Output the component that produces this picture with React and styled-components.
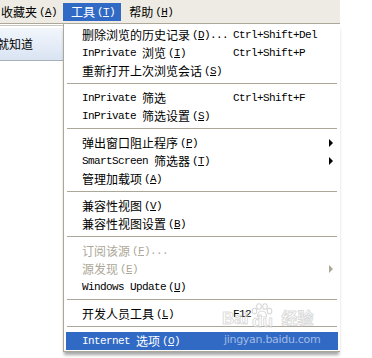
import React from 'react';
import styled, { createGlobalStyle } from 'styled-components';

const GlobalStyle = createGlobalStyle`
  html, body {
    margin: 0;
    padding: 0;
    background: #fff;
  }
  body {
    width: 372px;
    height: 358px;
    overflow: hidden;
    font: 12px/1 "Noto Sans CJK SC", "Liberation Sans", sans-serif;
    color: #000;
  }
`;

const Screen = styled.div`
  position: relative;
  width: 372px;
  height: 358px;
  overflow: hidden;
`;

const MenuBar = styled.div`
  display: flex;
  align-items: flex-start;
  width: 340px;
  height: 24px;
  box-sizing: border-box;
  padding-top: 3px;
  background: #edebe3;
  border-bottom: 1px solid #aca899;
`;

const BarItem = styled.div`
  display: flex;
  align-items: center;
  height: 18px;
  padding: 0 6px 0 8px;
  margin-left: ${p => (p.$first ? '-7px' : '0')};
  background: ${p => (p.$active ? '#316ac5' : 'transparent')};
  color: ${p => (p.$active ? '#fff' : '#000')};
  white-space: nowrap;
`;

const Latin = styled.span`
  font-family: "Liberation Mono", "DejaVu Sans Mono", monospace;
  font-size: 11px;
  letter-spacing: -0.6px;
  white-space: pre;
`;

const Accel = styled(Latin)`
  margin-left: 2px;
  u {
    text-decoration: underline;
    text-underline-offset: 1px;
  }
`;

const Body = styled.div`
  display: flex;
`;

const LeftPane = styled.div`
  width: 63px;
  margin-top: 1px;
  padding-top: 2px;
  border-top: 1px solid #c9c7bd;
`;

const Favorite = styled.div`
  display: flex;
  align-items: center;
  height: 33px;
  box-sizing: border-box;
  text-indent: -3px;
  background: linear-gradient(#f2f6fc, #d9e4f3);
  border-bottom: 1px solid #a9b0ba;
  overflow: hidden;
  white-space: nowrap;
`;

const Dropdown = styled.div`
  position: absolute;
  left: 63px;
  top: 24px;
  width: 277px;
  box-sizing: border-box;
  padding: 2px 2px 1px;
  background: #fff;
  border-left: 1px solid #aca899;
  border-bottom: 1px solid #aca899;
  box-shadow: 0 4px 3px -1px rgba(0, 0, 0, 0.35);
`;

const Row = styled.div`
  display: grid;
  grid-template-columns: 151px 1fr 10px;
  align-items: center;
  height: 18px;
  padding: 0 5px 0 16px;
  white-space: nowrap;
  color: ${p => (p.$active ? '#fff' : p.$disabled ? '#aca899' : '#000')};
  background: ${p => (p.$active ? '#316ac5' : 'transparent')};
`;

const Label = styled.span`
  display: flex;
  align-items: center;
`;

const Separator = styled.div`
  height: 1px;
  margin: 3px 1px 5px;
  background: #aca899;
`;

const Arrow = styled.span`
  justify-self: end;
  width: 0;
  height: 0;
  border-left: 4px solid currentColor;
  border-top: 4px solid transparent;
  border-bottom: 4px solid transparent;
`;

const Watermark = styled.div`
  position: absolute;
  left: 222px;
  top: 300px;
  display: flex;
  flex-direction: column;
  align-items: flex-start;
  pointer-events: none;
`;

const Logo = styled.div`
  display: flex;
  align-items: flex-end;
  height: 29px;
  font: bold 17px "Liberation Sans", Arial, sans-serif;
  color: rgba(255, 255, 255, 0.6);
  -webkit-text-stroke: 1px rgba(175, 175, 175, 0.45);
`;

const PawStack = styled.span`
  display: flex;
  flex-direction: column;
  align-items: center;
  margin-left: 3px;
`;

const Du = styled.span`
  margin-top: -3px;
  line-height: 15px;
`;

const Jing = styled.span`
  margin-left: 8px;
  font: bold 16px "Noto Sans CJK SC", sans-serif;
`;

const Site = styled.div`
  margin-top: 4px;
  padding-left: 2px;
  font: 11px "DejaVu Sans", Verdana, sans-serif;
  letter-spacing: -0.3px;
  color: rgba(255, 255, 255, 0.55);
`;

const items = [
  { label: '删除浏览的历史记录', key: 'D', tail: '...', shortcut: 'Ctrl+Shift+Del' },
  { label: 'InPrivate 浏览', key: 'I', shortcut: 'Ctrl+Shift+P' },
  { label: '重新打开上次浏览会话', key: 'S' },
  'sep',
  { label: 'InPrivate 筛选', shortcut: 'Ctrl+Shift+F' },
  { label: 'InPrivate 筛选设置', key: 'S' },
  'sep',
  { label: '弹出窗口阻止程序', key: 'P', submenu: true },
  { label: 'SmartScreen 筛选器', key: 'T', submenu: true },
  { label: '管理加载项', key: 'A' },
  'sep',
  { label: '兼容性视图', key: 'V' },
  { label: '兼容性视图设置', key: 'B' },
  'sep',
  { label: '订阅该源', key: 'F', tail: '...', disabled: true },
  { label: '源发现', key: 'E', disabled: true, submenu: true },
  { label: 'Windows Update', key: 'U' },
  'sep',
  { label: '开发人员工具', key: 'L', shortcut: 'F12' },
  'sep',
  { label: 'Internet 选项', key: 'O', active: true },
];

// ascii runs get the narrow mono face, like SimSun's half-width latin
const Text = ({ children }) =>
  children
    .split(/([\x00-\x7F]+)/)
    .filter(Boolean)
    .map((part, i) =>
      /^[\x00-\x7F]+$/.test(part) ? <Latin key={i}>{part}</Latin> : <span key={i}>{part}</span>
    );

const Caption = ({ text, keyChar, tail }) => (
  <Label>
    <Text>{text}</Text>
    {keyChar && (
      <Accel>
        (<u>{keyChar}</u>){tail}
      </Accel>
    )}
  </Label>
);

const Paw = () => (
  <svg width="22" height="14" viewBox="0 0 22 14">
    <g fill="rgba(255,255,255,0.6)" stroke="rgba(175,175,175,0.5)" strokeWidth="1.1">
      <ellipse cx="3.5" cy="8" rx="2.3" ry="2.8" />
      <ellipse cx="8" cy="3.5" rx="2.3" ry="2.8" />
      <ellipse cx="14" cy="3.5" rx="2.3" ry="2.8" />
      <ellipse cx="18.5" cy="8" rx="2.3" ry="2.8" />
      <path d="M11 8 C8 8 6.5 11 6.5 14 L15.5 14 C15.5 11 14 8 11 8 Z" />
    </g>
  </svg>
);

const App = () => (
  <Screen>
    <GlobalStyle />
    <MenuBar>
      <BarItem $first>
        <Caption text="收藏夹" keyChar="A" />
      </BarItem>
      <BarItem $active>
        <Caption text="工具" keyChar="T" />
      </BarItem>
      <BarItem>
        <Caption text="帮助" keyChar="H" />
      </BarItem>
    </MenuBar>
    <Body>
      <LeftPane>
        <Favorite>就知道</Favorite>
      </LeftPane>
    </Body>
    <Dropdown>
      {items.map((item, i) =>
        item === 'sep' ? (
          <Separator key={i} />
        ) : (
          <Row key={i} $active={item.active} $disabled={item.disabled}>
            <Caption text={item.label} keyChar={item.key} tail={item.tail} />
            <Latin>{item.shortcut || ''}</Latin>
            {item.submenu ? <Arrow /> : <span />}
          </Row>
        )
      )}
    </Dropdown>
    <Watermark>
      <Logo>
        <span>Bai</span>
        <PawStack>
          <Paw />
          <Du>du</Du>
        </PawStack>
        <Jing>经验</Jing>
      </Logo>
      <Site>jingyan.baidu.com</Site>
    </Watermark>
  </Screen>
);

export default App;
